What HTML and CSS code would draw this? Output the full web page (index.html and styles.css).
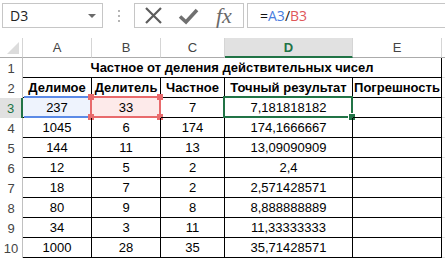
FILE: index.html
```html
<!DOCTYPE html>
<html lang="ru">
<head>
<meta charset="utf-8">
<link rel="stylesheet" href="styles.css">
</head>
<body>
<div class="toolbar">
  <div class="namebox"><span class="name">D3</span><span class="caret"></span></div>
  <div class="grip"><i></i><i></i><i></i></div>
  <div class="buttons">
    <svg class="ico" width="20" height="18" viewBox="0 0 20 18"><path d="M2 1 L17 16 M17 1 L2 16" stroke="#5c5c5c" stroke-width="2.2" fill="none"/></svg>
    <svg class="ico" width="22" height="18" viewBox="0 0 22 18"><path d="M2 9.5 L8 15 L19 3" stroke="#707070" stroke-width="3.6" fill="none" stroke-linejoin="miter"/></svg>
    <span class="fx">fx</span>
  </div>
  <div class="formula">=<span class="ref-a">A3</span>/<span class="ref-b">B3</span></div>
</div>
<div class="sheet">
  <div class="corner"><span class="tri"></span></div>
  <div class="ch">A</div><div class="ch">B</div><div class="ch">C</div><div class="ch active">D</div><div class="ch">E</div><div class="ch fill"></div>

  <div class="rh">1</div>
  <div class="c title">Частное от деления действительных чисел</div><div class="f"></div>

  <div class="rh">2</div>
  <div class="c b">Делимое</div><div class="c b">Делитель</div><div class="c b">Частное</div><div class="c b">Точный результат</div><div class="c b">Погрешность</div><div class="f"></div>

  <div class="rh active">3</div>
  <div class="c sa">237<span class="box-a"></span></div><div class="c sb">33<span class="box-b"><i class="k tl"></i><i class="k tr"></i><i class="k bl"></i><i class="k br"></i></span></div><div class="c">7</div><div class="c sd">7,181818182<span class="box-d"><i class="handle"></i></span></div><div class="c"></div><div class="f"></div>

  <div class="rh">4</div>
  <div class="c">1045</div><div class="c">6</div><div class="c">174</div><div class="c">174,1666667</div><div class="c"></div><div class="f"></div>

  <div class="rh">5</div>
  <div class="c">144</div><div class="c">11</div><div class="c">13</div><div class="c">13,09090909</div><div class="c"></div><div class="f"></div>

  <div class="rh">6</div>
  <div class="c">12</div><div class="c">5</div><div class="c">2</div><div class="c">2,4</div><div class="c"></div><div class="f"></div>

  <div class="rh">7</div>
  <div class="c">18</div><div class="c">7</div><div class="c">2</div><div class="c">2,571428571</div><div class="c"></div><div class="f"></div>

  <div class="rh">8</div>
  <div class="c">80</div><div class="c">9</div><div class="c">8</div><div class="c">8,888888889</div><div class="c"></div><div class="f"></div>

  <div class="rh">9</div>
  <div class="c">34</div><div class="c">3</div><div class="c">11</div><div class="c">11,33333333</div><div class="c"></div><div class="f"></div>

  <div class="rh">10</div>
  <div class="c">1000</div><div class="c">28</div><div class="c">35</div><div class="c">35,71428571</div><div class="c"></div><div class="f"></div>
</div>
</body>
</html>
```

FILE: styles.css
```css
* { box-sizing: border-box; }
html, body { margin: 0; padding: 0; background: #ffffff; }
body {
  width: 445px;
  height: 258px;
  overflow: hidden;
  font-family: "Liberation Sans", Arial, sans-serif;
  font-size: 13px;
  color: #000;
}

.toolbar {
  height: 38px;
  display: flex;
  align-items: flex-start;
  padding-top: 3px;
  padding-left: 2px;
}

.namebox {
  width: 101px;
  height: 25px;
  border: 1px solid #c6c6c6;
  display: flex;
  align-items: center;
  justify-content: space-between;
  padding: 0 6px 0 7px;
  font-family: "Open Sans", "Liberation Sans", sans-serif;
  font-size: 14px;
  color: #222;
}
.caret {
  width: 0; height: 0;
  border-left: 4px solid transparent;
  border-right: 4px solid transparent;
  border-top: 4px solid #6a6a6a;
}

.grip {
  width: 31px;
  height: 25px;
  display: flex;
  flex-direction: column;
  align-items: center;
  justify-content: center;
  gap: 3px;
}
.grip i {
  display: block;
  width: 2px; height: 2px;
  background: #b5b5b5;
}

.buttons {
  width: 110px;
  height: 25px;
  border: 1px solid #c6c6c6;
  display: flex;
  align-items: center;
  padding-left: 9px;
  gap: 14px;
}
.ico { display: block; }
.fx {
  font-family: "Liberation Serif", "Times New Roman", serif;
  font-style: italic;
  font-size: 22px;
  color: #6a6a6a;
  line-height: 1;
  margin-left: 2px;
}

.formula {
  flex: 1;
  margin-left: 3px;
  margin-right: -2px;
  height: 25px;
  border: 1px solid #c6c6c6;
  display: flex;
  align-items: center;
  padding-left: 12px;
  font-family: "Open Sans", "Liberation Sans", sans-serif;
  font-size: 14px;
  color: #111;
}
.ref-a { color: #4a7ee0; }
.ref-b { color: #e0575a; }

.sheet {
  display: grid;
  grid-template-columns: 23px 69px 69px 64px 128px 89px 1fr;
  grid-auto-rows: 20px;
}

.corner {
  position: relative;
  border-right: 1px solid #d5d5d5;
  border-bottom: 1px solid #ababab;
}
.tri {
  position: absolute;
  right: 3px;
  bottom: 3px;
  width: 0; height: 0;
  border-left: 12px solid transparent;
  border-bottom: 12px solid #dcdcdc;
}

.ch {
  border-right: 1px solid #d5d5d5;
  border-bottom: 1px solid #ababab;
  display: flex;
  align-items: center;
  justify-content: center;
  color: #444;
  font-size: 13px;
}
.ch.active {
  background: #e1e1e1;
  color: #217346;
  font-weight: bold;
  border-bottom: 2px solid #217346;
}
.ch.fill { border-right: none; }

.rh {
  border-right: 1px solid #c0c0c0;
  display: flex;
  align-items: center;
  justify-content: center;
  color: #444;
  font-size: 13px;
}
.rh.active {
  background: #e1e1e1;
  color: #217346;
  border-right: 2px solid #217346;
}

.c {
  position: relative;
  border-right: 1px solid #000;
  border-bottom: 1px solid #000;
  display: flex;
  align-items: center;
  justify-content: center;
  white-space: nowrap;
}
.c.b { font-weight: bold; }
.c.title {
  grid-column: 2 / 7;
  font-weight: bold;
}
.f { border-bottom: 1px solid #e2e2e2; }

.c.sa { background: #eef3fd; }
.c.sb { background: #fdeaea; }

.box-a {
  position: absolute;
  top: -2px; bottom: -1px; left: 1px; right: 2px;
  border-top: 2px solid #5b8ae6;
  border-bottom: 2px solid #5b8ae6;
}
.box-b {
  position: absolute;
  top: -2px; bottom: -1px; left: -2px; right: -1px;
  border: 2px solid #e86a6c;
}
.k {
  position: absolute;
  width: 6px; height: 6px;
  background: #e86a6c;
}
.k.tl { top: -4px; left: -4px; }
.k.tr { top: -4px; right: -4px; }
.k.bl { bottom: -4px; left: -4px; }
.k.br { bottom: -4px; right: -4px; }

.box-d {
  position: absolute;
  top: -2px; bottom: -1px; left: -2px; right: -1px;
  border: 2px solid #217346;
}
.handle {
  position: absolute;
  right: -4px; bottom: -4px;
  width: 6px; height: 6px;
  background: #217346;
  outline: 1px solid #fff;
}
```
